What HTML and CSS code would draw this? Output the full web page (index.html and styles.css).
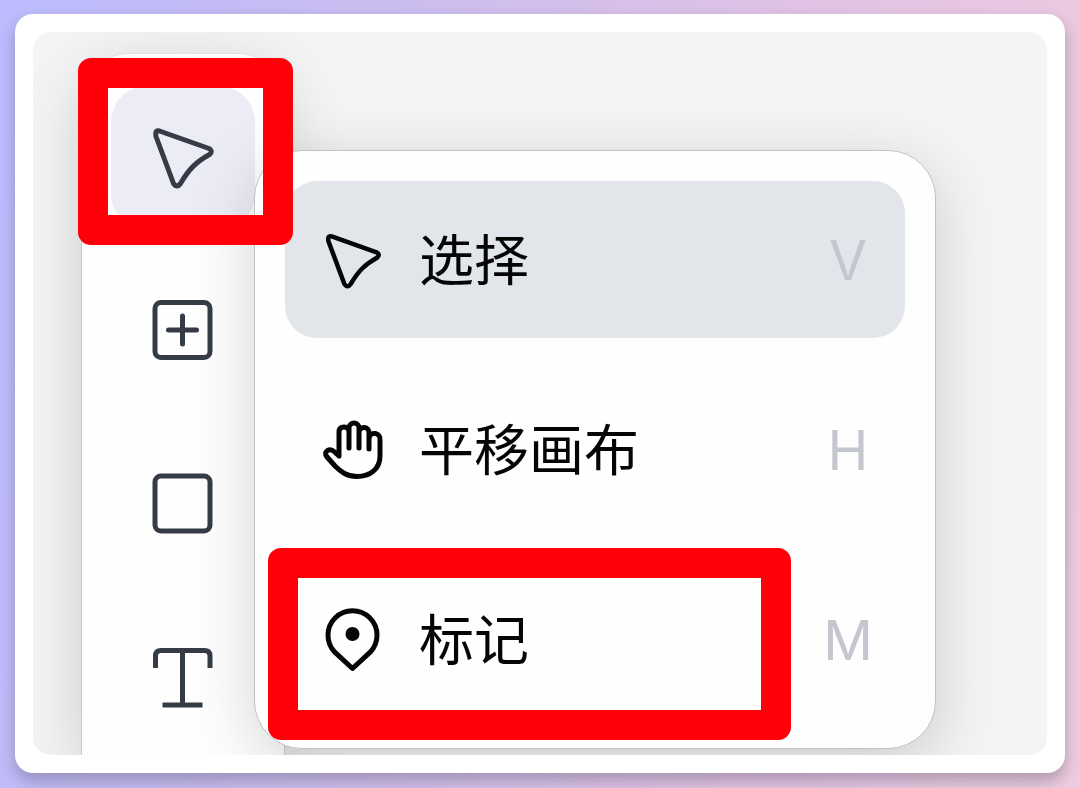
FILE: index.html
```html
<!DOCTYPE html>
<html lang="zh-CN">
<head>
<meta charset="utf-8">
<meta name="viewport" content="width=device-width, initial-scale=1">
<title>选择工具</title>
<link rel="stylesheet" href="styles.css">
</head>
<body>
<main class="card">
  <div class="canvas">
    <nav class="toolbar" aria-label="Tools">
      <div class="tool-group">
        <button class="tool active" type="button" aria-label="Select">
          <svg class="icon" viewBox="0 0 64 64"><path d="M8.500 5L58 22.500Q62.500 25 58.500 28.500C45 36 38 43 29.500 57.500Q26 62.500 22.500 57.500L5 10.500Q3.500 3.500 8.500 5Z"/></svg>
        </button>
        <div class="menu" role="menu">
          <button class="item selected" type="button" role="menuitem">
            <svg class="icon cursor" viewBox="0 0 64 64"><path d="M8.500 6L58 23.500Q62.500 26 58.500 29.500C45 37 38 44 29.500 58.500Q26 63.500 22.500 58.500L5 11.500Q3.500 4.500 8.500 6Z"/></svg>
            <span class="label">选择</span><span class="key">V</span>
          </button>
          <button class="item" type="button" role="menuitem">
            <svg class="icon" viewBox="0 0 64 64"><path d="M18 38V14Q18 9 23 9Q28 9 28 14M28 30V10A5 5 0 0 1 38 10V30M38 14A5 5 0 0 1 48 15V31M48 20A5.500 5.500 0 0 1 59 22V38C59 51 49 58.500 36 58.500C26 58.500 20 54 14 48L6 39Q3 35 6.500 32.500Q10 30.500 13 33.500L18 38"/></svg>
            <span class="label">平移画布</span><span class="key">H</span>
          </button>
          <button class="item" type="button" role="menuitem">
            <svg class="icon" viewBox="0 0 64 64"><path d="M31.500 60.500L13.800 44.200A24.500 24.500 0 1 1 49.200 44.200Z"/><circle class="dot" cx="31.500" cy="26" r="7"/></svg>
            <span class="label">标记</span><span class="key">M</span>
            <span class="frame frame-item"></span>
          </button>
        </div>
        <span class="frame frame-tool"></span>
      </div>
      <button class="tool" type="button" aria-label="Add">
        <svg class="icon" viewBox="0 0 64 64"><rect x="4" y="3.500" width="55" height="55" rx="6"/><path d="M31.500 17V45M17.500 31H45.500"/></svg>
      </button>
      <button class="tool" type="button" aria-label="Shape">
        <svg class="icon" viewBox="0 0 64 64"><rect x="4" y="4" width="55" height="55" rx="6"/></svg>
      </button>
      <button class="tool" type="button" aria-label="Text">
        <svg class="icon flat" viewBox="0 0 64 64"><path d="M4.500 23V11Q4.500 5.500 10 5.500H53.500Q59 5.500 59 11V23M31.500 5.500V60M11.500 60H51.500"/></svg>
      </button>
    </nav>
  </div>
</main>
</body>
</html>
```
FILE: styles.css
```css
* { box-sizing: border-box; }

body {
  margin: 0;
  min-height: 100vh;
  padding: 14px 15px 15px;
  display: flex;
  background: linear-gradient(100deg, #bcbcff 0%, #cbbdf0 32%, #e3c4e4 70%, #efcde0 100%);
  font-family: Inter, "Noto Sans CJK SC", sans-serif;
}

.card {
  flex: 1;
  display: flex;
  padding: 18px;
  border-radius: 18px;
  background: #fff;
  box-shadow: 0 8px 16px rgba(80, 80, 100, 0.4);
}

.canvas {
  flex: 1;
  display: flex;
  padding: 21px 0 0 48px;
  border-radius: 18px;
  background: #f3f4f6;
  overflow: hidden;
}

.toolbar {
  display: flex;
  flex-direction: column;
  gap: 29px;
  padding: 32px 29px 0;
  border: 1px solid #c6c8ca;
  border-top-color: #dfe1e2;
  border-bottom: 0;
  border-radius: 48px 48px 0 0;
  background: #fefefe;
  box-shadow: 0 16px 64px rgba(0, 0, 0, 0.16);
}

.tool-group {
  position: relative;
  z-index: 1;
}

.tool {
  display: flex;
  align-items: center;
  justify-content: center;
  width: 144px;
  height: 144px;
  padding: 0;
  border: 0;
  border-radius: 36px;
  background: none;
  color: #363c45;
}

.active { background: #ebecf5; }

.icon {
  flex: none;
  width: 64px;
  height: 64px;
  overflow: visible;
  fill: none;
  stroke: currentColor;
  stroke-width: 5;
  stroke-linecap: round;
  stroke-linejoin: round;
}

.flat { stroke-linecap: butt; }

.cursor {
  width: 58px;
  height: 58px;
  margin: 3px;
}

.dot {
  fill: currentColor;
  stroke: none;
}

.menu {
  position: absolute;
  top: 64px;
  left: 143px;
  width: 682px;
  display: flex;
  flex-direction: column;
  gap: 33px;
  padding: 30px;
  border: 1px solid #bfc1c3;
  border-radius: 48px;
  background: #fefefe;
  box-shadow: 0 16px 64px rgba(0, 0, 0, 0.17);
}

.item {
  position: relative;
  display: flex;
  align-items: center;
  gap: 34px;
  height: 157px;
  padding: 0 29px 0 36px;
  border: 0;
  border-radius: 32px;
  background: none;
  color: #050505;
  font: inherit;
  font-size: 55px;
  line-height: 82px;
  text-align: left;
}

.selected { background: #e2e6ea; }

.label { flex: 1; }

.key {
  width: 56px;
  color: #c4c7cd;
  text-align: center;
}

.frame {
  position: absolute;
  border: 30px solid #ff0008;
  border-radius: 13px;
  pointer-events: none;
}

.frame-tool { inset: -28px -38px -15px -33px; }

.frame-item { inset: -13px 114px -22px -17px; }
```
